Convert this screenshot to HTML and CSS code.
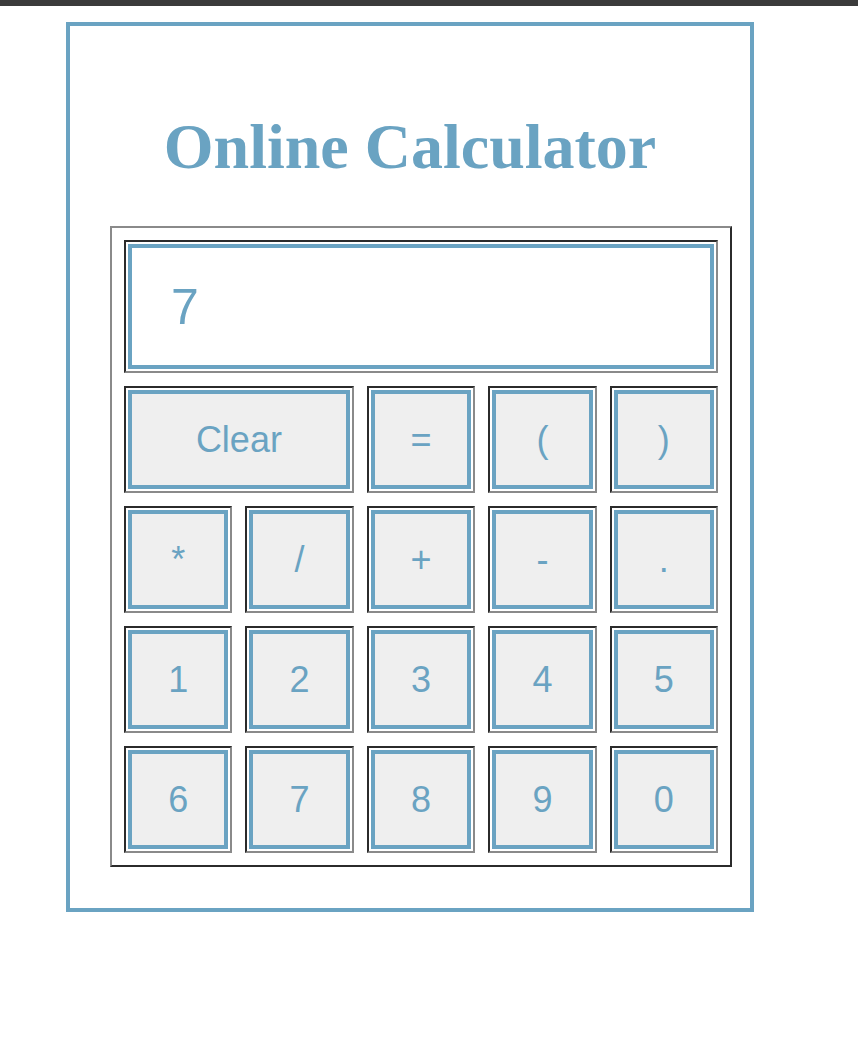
FILE: index.html
```html
<!DOCTYPE html>
<html>
<head>
<meta charset="utf-8">
<title>Online Calculator</title>
<link rel="stylesheet" href="styles.css">
</head>
<body>
<div class="topbar"></div>
<div class="box">
  <h1 class="title">Online Calculator</h1>
  <div class="calc">
    <div class="cell span5"><input class="display" type="text" value="7"></div>
    <div class="cell span2"><button class="key">Clear</button></div>
    <div class="cell"><button class="key">=</button></div>
    <div class="cell"><button class="key">(</button></div>
    <div class="cell"><button class="key">)</button></div>
    <div class="cell"><button class="key">*</button></div>
    <div class="cell"><button class="key">/</button></div>
    <div class="cell"><button class="key">+</button></div>
    <div class="cell"><button class="key">-</button></div>
    <div class="cell"><button class="key">.</button></div>
    <div class="cell"><button class="key">1</button></div>
    <div class="cell"><button class="key">2</button></div>
    <div class="cell"><button class="key">3</button></div>
    <div class="cell"><button class="key">4</button></div>
    <div class="cell"><button class="key">5</button></div>
    <div class="cell"><button class="key">6</button></div>
    <div class="cell"><button class="key">7</button></div>
    <div class="cell"><button class="key">8</button></div>
    <div class="cell"><button class="key">9</button></div>
    <div class="cell"><button class="key">0</button></div>
  </div>
</div>
</body>
</html>
```
FILE: styles.css
```css
html, body {
  margin: 0;
  padding: 0;
  background: #ffffff;
}
.topbar {
  height: 6px;
  background: #3b3b3b;
}
.box {
  box-sizing: border-box;
  width: 688px;
  margin: 16px 0 0 66px;
  border: 4px solid #6aa3c2;
  padding: 85px 0 41px 0;
}
.title {
  margin: 0 0 43px 0;
  font-family: "Liberation Serif", "Times New Roman", serif;
  font-weight: bold;
  font-size: 64px;
  line-height: 72px;
  color: #6aa3c2;
  text-align: center;
}
.calc {
  box-sizing: border-box;
  width: 622px;
  margin-left: 40px;
  border: 2px solid;
  border-color: #8a8a8a #2b2b2b #2b2b2b #8a8a8a;
  padding: 12px;
  display: grid;
  grid-template-columns: repeat(5, 1fr);
  grid-template-rows: 133px repeat(4, 107px);
  gap: 13px;
}
.cell {
  box-sizing: border-box;
  border: 2px solid;
  border-color: #2b2b2b #8a8a8a #8a8a8a #2b2b2b;
  padding: 2px;
  display: flex;
}
.span5 { grid-column: span 5; }
.span2 { grid-column: span 2; }
.key, .display {
  box-sizing: border-box;
  flex: 1;
  width: 100%;
  height: 100%;
  margin: 0;
  border: 4px solid #6aa3c2;
  border-radius: 0;
  font-family: "Liberation Sans", Arial, sans-serif;
  color: #6aa3c2;
  outline: none;
}
.key {
  background: #efefef;
  font-size: 36px;
  padding: 0;
}
.display {
  background: #ffffff;
  font-size: 50px;
  padding: 0 0 0 39px;
}
```
